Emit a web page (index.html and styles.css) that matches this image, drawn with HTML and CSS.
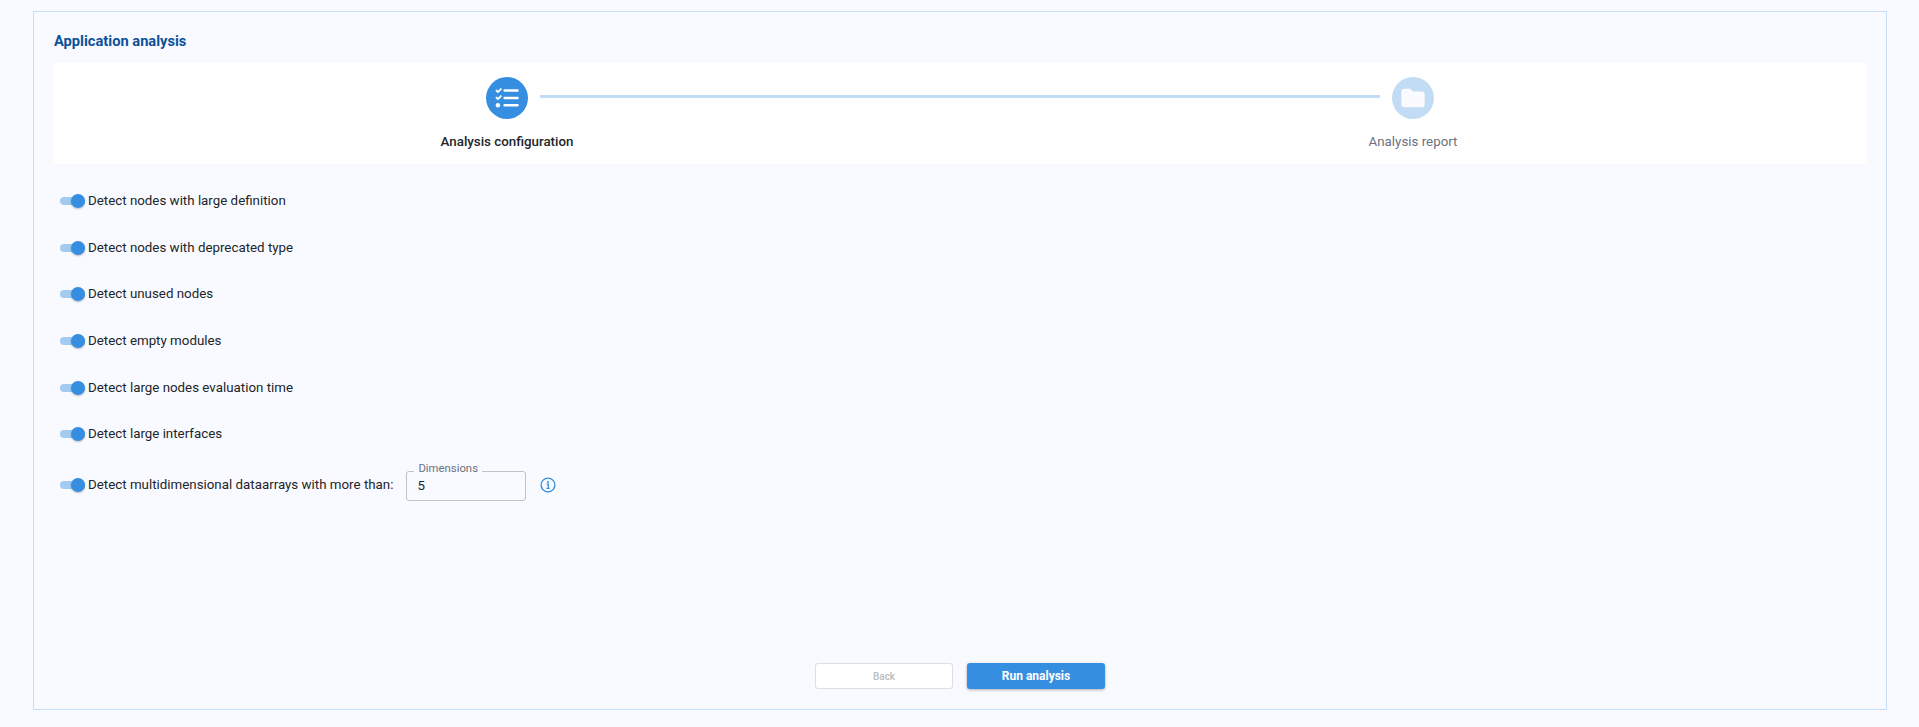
FILE: index.html
```html
<!DOCTYPE html>
<html lang="en">
<head>
<meta charset="utf-8">
<title>Application analysis</title>
<link rel="stylesheet" href="styles.css">
</head>
<body>
<main class="panel">
  <h1 class="title">Application analysis</h1>
  <section class="stepper">
    <div class="connector"></div>
    <div class="step">
      <div class="step-icon step-icon-active">
        <svg width="28" height="28" viewBox="0 0 24 24" fill="none">
          <path d="M2.500 5.200l1.700 1.700 3-3M2.500 11.200l1.700 1.700 3-3" stroke="#fff" stroke-width="1.600"/>
          <circle cx="4.200" cy="18.200" r="1.900" fill="#fff"/>
          <path d="M10 5.500h11M10 12h11M10 18.200h11" stroke="#fff" stroke-width="2.200" stroke-linecap="round"/>
        </svg>
      </div>
      <div class="step-label step-label-active">Analysis configuration</div>
    </div>
    <div class="step">
      <div class="step-icon step-icon-todo">
        <svg width="28" height="28" viewBox="0 0 24 24"><path d="M2 6.200C2 5 3 4 4.200 4h5.400l2.400 2.400h7.800c1.200 0 2.200 1 2.200 2.200v9.200c0 1.200-1 2.200-2.200 2.200H4.200C3 20 2 19 2 17.800z" fill="#fbfbff"/></svg>
      </div>
      <div class="step-label">Analysis report</div>
    </div>
  </section>
  <section class="options">
    <div class="option"><span class="toggle"><span class="knob"></span></span><span class="option-text">Detect nodes with large definition</span></div>
    <div class="option"><span class="toggle"><span class="knob"></span></span><span class="option-text">Detect nodes with deprecated type</span></div>
    <div class="option"><span class="toggle"><span class="knob"></span></span><span class="option-text">Detect unused nodes</span></div>
    <div class="option"><span class="toggle"><span class="knob"></span></span><span class="option-text">Detect empty modules</span></div>
    <div class="option"><span class="toggle"><span class="knob"></span></span><span class="option-text">Detect large nodes evaluation time</span></div>
    <div class="option"><span class="toggle"><span class="knob"></span></span><span class="option-text">Detect large interfaces</span></div>
    <div class="option option-last">
      <span class="toggle"><span class="knob"></span></span>
      <span class="option-text">Detect multidimensional dataarrays with more than:</span>
      <div class="field"><span class="field-label">Dimensions</span><span class="field-value">5</span></div>
      <svg class="info" width="16" height="16" viewBox="0 0 16 16" fill="none">
        <circle cx="8" cy="8" r="6.900" stroke="#368ee0" stroke-width="1.400"/>
        <circle cx="8" cy="4.900" r="1" fill="#368ee0"/>
        <path d="M6.600 7.200H8.300V11M6.500 11.300h3.200" stroke="#368ee0" stroke-width="1.300"/>
      </svg>
    </div>
  </section>
  <footer class="actions">
    <button class="btn btn-back" type="button" disabled>Back</button>
    <button class="btn btn-run" type="button">Run analysis</button>
  </footer>
</main>
</body>
</html>
```
FILE: styles.css
```css
* { box-sizing: border-box; }
html, body { height: 100%; }
body {
  margin: 0;
  padding: 11px 32px 17px 33px;
  background: #f9faff;
  font-family: Roboto, "Liberation Sans", sans-serif;
  color: #212529;
  overflow: hidden;
}
.panel {
  height: 699px;
  border: 1px solid #c6dff7;
  padding: 18px 20px 20px 20px;
  display: flex;
  flex-direction: column;
}
.title {
  margin: 0;
  height: 33px;
  line-height: 22px;
  font-size: 14.670px;
  font-weight: 700;
  color: #0b5199;
}
.stepper {
  position: relative;
  display: grid;
  grid-template-columns: 1fr 1fr;
  height: 101px;
  background: #fff;
  border-radius: 4px;
  padding-top: 14px;
}
.connector {
  position: absolute;
  top: 32px;
  left: 486px;
  right: 486px;
  height: 3px;
  background: #c2dcf5;
}
.step { display: flex; flex-direction: column; align-items: center; }
.step-icon {
  width: 42px;
  height: 42px;
  border-radius: 50%;
  display: flex;
  align-items: center;
  justify-content: center;
}
.step-icon-active { background: #368ee0; }
.step-icon-todo { background: #c2dcf5; }
.step-label {
  margin-top: 13px;
  line-height: 20px;
  font-size: 13.330px;
  color: #6b7280;
}
.step-label-active { font-weight: 500; color: #212529; }
.options {
  padding: 13px 0 0 6px;
  display: flex;
  flex-direction: column;
}
.option {
  display: flex;
  align-items: center;
  height: 46.700px;
  font-size: 13.330px;
  color: #212529;
}
.option-last { height: 55px; }
.toggle {
  position: relative;
  flex: none;
  width: 25px;
  height: 8px;
  margin-top: 1px;
  border-radius: 4px;
  background: #a3cbf1;
  margin-right: 3px;
}
.knob {
  position: absolute;
  right: 0;
  top: -3px;
  width: 14px;
  height: 14px;
  border-radius: 50%;
  background: #368ee0;
  box-shadow: 0 1px 2px rgba(0, 0, 0, .25);
}
.field {
  position: relative;
  flex: none;
  width: 120px;
  height: 30px;
  margin: 2px 0 0 13px;
  border: 1px solid #bfc3c9;
  border-radius: 3px;
  padding-left: 10px;
  line-height: 28px;
  font-size: 13.330px;
}
.field-label {
  position: absolute;
  top: -11px;
  left: 7px;
  padding: 0 4px;
  line-height: 14px;
  font-size: 11.330px;
  color: #6b7280;
  background: #f9faff;
}
.info { margin-left: 14px; flex: none; }
.actions {
  margin-top: auto;
  display: flex;
  justify-content: center;
  gap: 14px;
}
.btn {
  width: 138px;
  height: 26px;
  border-radius: 3px;
  padding: 0;
  font-family: inherit;
  font-size: 12px;
  font-weight: 500;
}
.btn-back {
  background: #fff;
  border: 1px solid #dcdfe3;
  color: #b9bcc0;
  font-size: 10px;
}
.btn-run {
  background: #368ee0;
  border: 0;
  color: #fff;
  font-weight: 700;
  box-shadow: 0 1px 3px rgba(0, 0, 0, .3);
}
```
